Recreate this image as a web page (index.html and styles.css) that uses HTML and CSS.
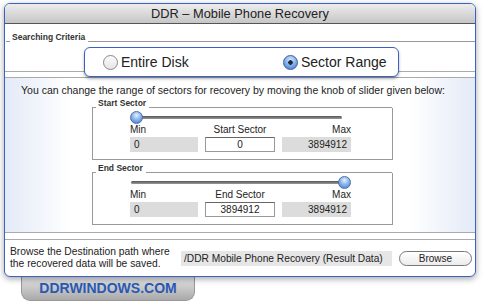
FILE: index.html
```html
<!DOCTYPE html>
<html lang="en">
  <head>
    <meta charset="UTF-8" />
    <title>DDR - Mobile Phone Recovery</title>
    <link rel="stylesheet" href="styles.css">
  </head>
  <body>
    <div class="window">
      <div class="titlebar">DDR – Mobile Phone Recovery</div>

      <div class="group-head crit-head">
        <span class="tick"></span>
        <span class="legend">Searching Criteria</span>
        <span class="rule"></span>
      </div>
      <div class="crit-body">
        <div class="radio-box">
          <label class="radio"><span class="dot"></span>Entire Disk</label>
          <label class="radio"><span class="dot on"></span>Sector Range</label>
        </div>
      </div>

      <div class="range">
        <p class="intro">You can change the range of sectors for recovery by moving the knob of slider given below:</p>

        <div class="group-head sector-head">
          <span class="tick"></span>
          <span class="legend">Start Sector</span>
          <span class="rule"></span>
        </div>
        <div class="sector-box">
          <div class="slider"><span class="track"></span><span class="knob"></span></div>
          <div class="labels">
            <span>Min</span><span class="mid">Start Sector</span><span class="max">Max</span>
          </div>
          <div class="fields">
            <span class="field ro">0</span>
            <span class="field edit">0</span>
            <span class="field ro max">3894912</span>
          </div>
        </div>

        <div class="group-head sector-head end-head">
          <span class="tick"></span>
          <span class="legend">End Sector</span>
          <span class="rule"></span>
        </div>
        <div class="sector-box">
          <div class="slider end"><span class="track"></span><span class="knob"></span></div>
          <div class="labels">
            <span>Min</span><span class="mid">End Sector</span><span class="max">Max</span>
          </div>
          <div class="fields">
            <span class="field ro">0</span>
            <span class="field edit">3894912</span>
            <span class="field ro max">3894912</span>
          </div>
        </div>
      </div>

      <div class="dest">
        <p class="dest-text">Browse the Destination path where<br>the recovered data will be saved.</p>
        <span class="path">/DDR Mobile Phone Recovery (Result Data)</span>
        <button class="browse">Browse</button>
      </div>
    </div>
    <div class="site-tab">DDRWINDOWS.COM</div>
  </body>
</html>
```

FILE: styles.css
```css
body {
  margin: 0;
  padding-top: 3px;
  background: #fff;
  font-family: "Liberation Sans", Arial, sans-serif;
  color: #222;
}

.window {
  position: relative;
  z-index: 2;
  width: 470px;
  height: 272px;
  margin-left: 4px;
  border: 1px solid #3a62c6;
  border-radius: 6px;
  background: #fff;
  box-shadow: 0 2px 6px rgba(0, 0, 0, 0.35);
  overflow: hidden;
}

.titlebar {
  height: 19px;
  border-bottom: 1px solid #555;
  background: linear-gradient(#ededed, #c6c6c6);
  font-size: 12.8px;
  line-height: 19px;
  text-align: center;
  color: #222;
}

/* group headings: label sitting on a rule */
.group-head {
  display: flex;
  align-items: flex-end;
  height: 10px;
}
.group-head .tick {
  width: 4px;
  border-bottom: 1px solid #999;
}
.group-head .rule {
  flex: 1;
  border-bottom: 1px solid #999;
}
.legend {
  padding: 0 3px 0 2px;
  font-size: 8.5px;
  font-weight: bold;
  line-height: 10px;
  color: #333;
}

.crit-head {
  margin-top: 8px;
  margin-left: 1px;
}

.crit-body {
  height: 24px;
  padding-top: 5px;
  border-bottom: 1px solid #aaa;
}

.radio-box {
  position: relative;
  z-index: 3;
  display: flex;
  align-items: center;
  width: 313px;
  height: 28px;
  margin-left: 79px;
  border: 1px solid #3a62c6;
  border-radius: 6px;
  background: #fff;
  box-shadow: 0 2px 3px rgba(0, 0, 0, 0.3);
}

.radio {
  display: flex;
  align-items: center;
  gap: 3px;
  font-size: 14px;
  color: #222;
}
.radio:first-child {
  margin-left: 18px;
  width: 180px;
}
.dot {
  width: 13px;
  height: 13px;
  border: 1px solid #888;
  border-radius: 50%;
  background: linear-gradient(#fafafa, #e6e6e6);
}
.dot.on {
  border-color: #3b5f9c;
  background: radial-gradient(circle at 50% 50%, #1d2a44 0, #1d2a44 2px, transparent 2.5px),
    radial-gradient(circle at 50% 30%, #d6e6fb 0, #7aa8e6 55%, #3e74c8 100%);
}

.range {
  height: 154px;
  margin-top: 5px;
  border-top: 1px solid #aaa;
  border-bottom: 1px solid #aaa;
  background: linear-gradient(to right, #e3eaf7 0, #fff 14%, #fff 86%, #e3eaf7 100%);
}

.intro {
  margin: 6px 0 0 16px;
  font-size: 10.5px;
  line-height: 13px;
  white-space: nowrap;
  color: #222;
}

.sector-head {
  width: 300px;
  margin: 1px 0 0 87px;
}
.end-head {
  margin-top: 3px;
}

.sector-box {
  width: 221px;
  height: 42px;
  margin-left: 87px;
  padding: 3px 41px 6px 37px;
  border: 1px solid #999;
  border-top: 0;
}

.slider {
  position: relative;
  height: 12px;
}
.track {
  position: absolute;
  left: 1px;
  right: 9px;
  top: 5px;
  height: 3px;
  border-radius: 2px;
  background: linear-gradient(#555, #999);
}
.knob {
  position: absolute;
  left: 0;
  top: 0;
  width: 11px;
  height: 11px;
  border: 1px solid #4d6ea8;
  border-radius: 50%;
  background: radial-gradient(circle at 50% 30%, #e6f0fd 0, #8db6ec 45%, #3f77cc 100%);
}
.slider.end .knob {
  left: auto;
  right: 0;
}

.labels {
  display: grid;
  grid-template-columns: 68px 84px 69px;
  margin-top: 1px;
  font-size: 10px;
  line-height: 12px;
  color: #222;
}
.labels .mid {
  text-align: center;
}
.labels .max {
  text-align: right;
}

.fields {
  display: grid;
  grid-template-columns: 68px 70px 69px;
  column-gap: 7px;
  margin-top: 1px;
}
.field {
  height: 15px;
  padding: 0 4px;
  font-size: 10px;
  line-height: 15px;
  color: #222;
}
.field.ro {
  background: #dcdcdc;
}
.field.ro.max {
  text-align: right;
}
.field.edit {
  height: 13px;
  line-height: 13px;
  border: 1px solid #999;
  border-top-color: #666;
  background: #fff;
  text-align: center;
}

.dest {
  display: flex;
  align-items: center;
  height: 36px;
  margin-top: 6px;
  border-top: 1px solid #aaa;
}
.dest-text {
  width: 171px;
  margin: 0 0 0 5px;
  font-size: 10.3px;
  line-height: 12.5px;
  white-space: nowrap;
}
.path {
  width: 208px;
  height: 15px;
  padding-left: 3px;
  background: #e6e6e6;
  font-size: 10.2px;
  line-height: 15px;
  white-space: nowrap;
}
.browse {
  width: 73px;
  height: 15px;
  margin-left: 7px;
  padding: 0;
  border: 1px solid #777;
  border-radius: 8px;
  background: linear-gradient(#fff, #ececec);
  font-family: inherit;
  font-size: 10px;
  color: #222;
}

.site-tab {
  width: 172px;
  height: 23px;
  margin-left: 21px;
  border: 1px solid #999;
  border-top: 0;
  border-radius: 0 0 9px 9px;
  background: linear-gradient(#e4e4e4, #a9a9a9);
  font-size: 14px;
  font-weight: bold;
  line-height: 22px;
  text-align: center;
  color: #2a59b4;
}
```
